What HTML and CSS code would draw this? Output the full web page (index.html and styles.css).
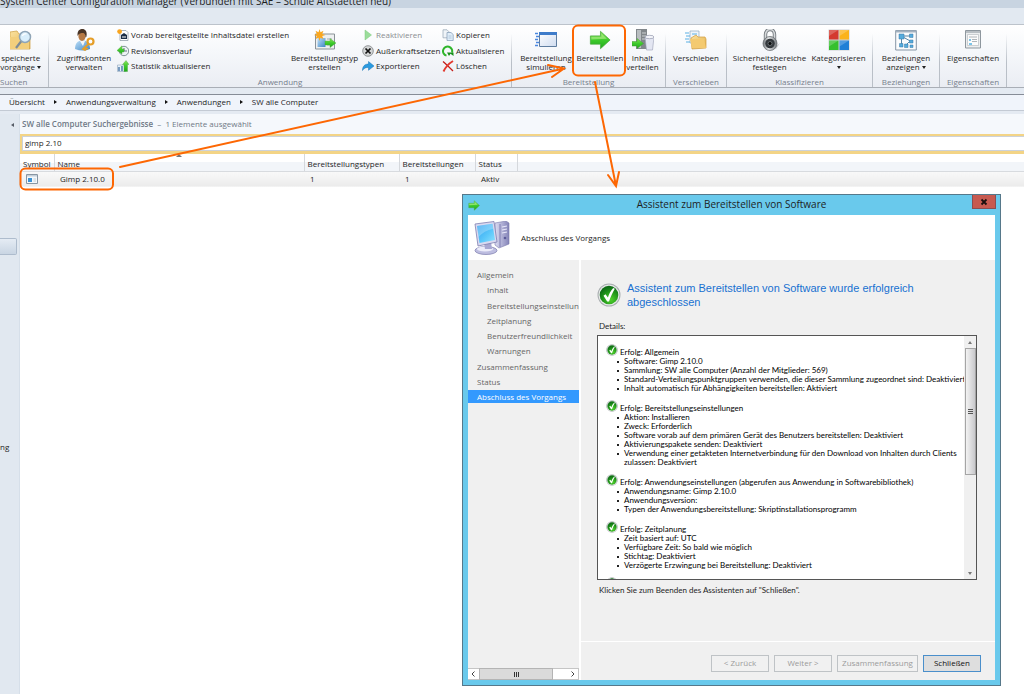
FILE: index.html
```html
<!DOCTYPE html>
<html lang="de">
<head>
<meta charset="utf-8">
<title>System Center Configuration Manager</title>
<link rel="stylesheet" href="styles.css">
</head>
<body>
<svg class="defs" width="0" height="0" aria-hidden="true">
  <defs>
    <linearGradient id="green" x1="0" y1="0" x2="0" y2="1"><stop offset="0" stop-color="#8be35c"/><stop offset=".5" stop-color="#3ecb2c"/><stop offset="1" stop-color="#20a81c"/></linearGradient>
    <linearGradient id="folder" x1="0" y1="0" x2="1" y2="1"><stop offset="0" stop-color="#fbe3a0"/><stop offset="1" stop-color="#e0ae4a"/></linearGradient>
    <linearGradient id="metal" x1="0" y1="0" x2="1" y2="0"><stop offset="0" stop-color="#6f7478"/><stop offset=".4" stop-color="#e6e8ea"/><stop offset="1" stop-color="#74797d"/></linearGradient>
    <linearGradient id="blue" x1="0" y1="0" x2="1" y2="1"><stop offset="0" stop-color="#bfe0f8"/><stop offset="1" stop-color="#3e86c6"/></linearGradient>
    <linearGradient id="screen" x1="0" y1="0" x2="1" y2="1"><stop offset="0" stop-color="#2d9ff0"/><stop offset=".6" stop-color="#5cc8fa"/><stop offset="1" stop-color="#8ee2ff"/></linearGradient>
    <linearGradient id="lilac" x1="0" y1="0" x2="1" y2="0"><stop offset="0" stop-color="#dcdcf2"/><stop offset="1" stop-color="#8484b8"/></linearGradient>
    <linearGradient id="window" x1="0" y1="0" x2="1" y2="1"><stop offset="0" stop-color="#fff"/><stop offset="1" stop-color="#cfdcf0"/></linearGradient>
    <radialGradient id="ball" cx=".6" cy=".75" r=".7"><stop offset="0" stop-color="#4fd02c"/><stop offset=".6" stop-color="#21961a"/><stop offset="1" stop-color="#0f6d16"/></radialGradient>
    <symbol id="check" viewBox="0 0 24 24">
      <circle cx="12" cy="12" r="11.5" fill="#a9aeb0"/><circle cx="12" cy="12" r="10.5" fill="#e6e8e8"/><circle cx="12" cy="12" r="9.3" fill="url(#ball)"/>
      <path d="M6.5 12.8l2-1.5 2.4 3.2C12 11 13.600 8 16.200 5l1.600.7C15.600 9.500 13.400 14 12 18.500h-1.800z" fill="#fff"/>
    </symbol>
    <symbol id="arrow" viewBox="0 0 24 22">
      <path d="M1.500 6.500h11V1.500L23 11 12.500 20.500v-5h-11z" fill="url(#green)" stroke="#48a83c" stroke-width=".8"/>
      <path d="M2.500 7.500h11V4l6 5.500-17 1z" fill="#b5f08c" opacity=".6"/>
    </symbol>
  </defs>
</svg>

<header class="titlebar">System Center Configuration Manager (Verbunden mit SAE – Schule Altstaetten neu)</header>
<div class="tabstrip"></div>

<nav class="ribbon" aria-label="Menüband">
  <section class="group group-search">
    <div class="tools">
      <button class="big"><svg viewBox="0 0 22 22"><path d="M0 3l7-1 2 3h11v15H0z" fill="url(#folder)" stroke="#d2a64e" stroke-width=".8"/><path d="M0 8h19v12H0z" fill="#f3cf7c"/><circle cx="15" cy="8" r="5.500" fill="#d9eefb" stroke="#8fa5b8" stroke-width="1.500"/><path d="M12.500 7a3 3 0 0 1 4-2" stroke="#fff" stroke-width="1.200" fill="none"/><path d="M11 12.500l-5 6.500" stroke="#7d8b97" stroke-width="2.200"/></svg><span>speicherte<br>vorgänge <i class="caret"></i></span></button>
    </div>
    <h2>Suchen</h2>
  </section>

  <section class="group">
    <div class="tools tools-app">
      <button class="big"><svg viewBox="0 0 22 22"><path d="M2 20c0-6 3-8 6-8.500h3c3 .5 6 3 6 8.500q-7 3-15 0z" fill="url(#blue)"/><path d="M7 12l3 5 2-5z" fill="#f5f5f5"/><ellipse cx="9" cy="7" rx="3.600" ry="5" fill="#b57945"/><path d="M4.500 7C4 1 7 0 9.500 0s5 2 4 7.500l-1 1c0-3-1-4-2-4.500-3 0-4 0-6 3z" fill="#493527"/><circle cx="17.500" cy="12.500" r="3" fill="none" stroke="#e59e28" stroke-width="2.200"/><path d="M15.500 15l-5.500 5 2 1 1-1.500 2 .5" fill="none" stroke="#e59e28" stroke-width="1.800"/></svg><span>Zugriffskonten<br>verwalten</span></button>
      <div class="stack">
        <button class="small"><svg viewBox="0 0 12 12"><path d="M3 1.500h6l2 2v8H3z" fill="#fff" stroke="#8693a0" stroke-width=".7"/><path d="M4 6l3-2 3 2v4H4z" fill="#1c2d45"/><path d="M5 8h4" stroke="#fff"/><circle cx="2.600" cy="2.600" r="2.400" fill="#f9a51e"/></svg>Vorab bereitgestellte Inhaltsdatei erstellen</button>
        <button class="small"><svg viewBox="0 0 12 12"><circle cx="7" cy="6" r="4.700" fill="#eef3f5" stroke="#7e9296"/><path d="M7 3v3h3" stroke="#456" fill="none" stroke-width=".8"/><path d="M5 .8L0 5.500 5 9V7h2V4H5z" fill="url(#green)" stroke="#55a64c" stroke-width=".4"/></svg>Revisionsverlauf</button>
        <button class="small"><svg viewBox="0 0 12 12"><path d="M.5 5h8v6.500h-8z" fill="#e6eff8" stroke="#8fa5bb" stroke-width=".6"/><path d="M2 7v4M5 6v5" stroke="#4878a8" stroke-width="1.400"/><path d="M9 11.500H7V4.500H5.500L9 .5l3 4h-1.500v7z" fill="url(#green)" stroke="#49a53e" stroke-width=".4"/></svg>Statistik aktualisieren</button>
      </div>
      <button class="big"><svg viewBox="0 0 22 22"><path d="M1.500 5h19v15h-19z" fill="#eef0f1" stroke="#8a9298"/><path d="M3.500 9h8v9h-8z" fill="url(#blue)"/><path d="M13 10h5M13 16h5" stroke="#a5adb2"/><path d="M11 12h5V9.500l6 4.500-6 4.500V16h-5z" fill="url(#green)" stroke="#4da542" stroke-width=".4"/><path d="M5.500 0l1 3.200 3-1.400L8.200 5l3.300 1-3.300 1.100 1.300 3-3-1.300-1 3.200-1-3.200-3 1.300 1.300-3L0 6l2.800-1-1.300-3.200 3 1.400z" fill="#f9a720"/></svg><span>Bereitstellungstyp<br>erstellen</span></button>
      <div class="stack">
        <button class="small" disabled><svg viewBox="0 0 12 12"><path d="M3 1l6.500 5L3 11z" fill="#9bdd9b" stroke="#7cc97c" stroke-width=".5"/></svg>Reaktivieren</button>
        <button class="small"><svg viewBox="0 0 12 12"><circle cx="6" cy="6" r="5.300" fill="#d4d6d7" stroke="#7c8082" stroke-width=".8"/><path d="M3.500 3.500l5 5m0-5l-5 5" stroke="#111" stroke-width="1.700"/></svg>Außerkraftsetzen</button>
        <button class="small"><svg viewBox="0 0 12 12"><path d="M.5 10.500C.5 6 3 4 6.500 4V1.500L12 6 6.500 10.300V7.500C4 7.300 2 8 .5 10.500z" fill="#2b9be0" stroke="#1b75b5" stroke-width=".5"/></svg>Exportieren</button>
      </div>
      <div class="stack">
        <button class="small"><svg viewBox="0 0 12 12"><path d="M1 .8h4l2 2v6H1z" fill="#f0f4f8" stroke="#93a3b5" stroke-width=".7"/><path d="M5 3.500h4l2.200 2v6H5z" fill="#e0edf8" stroke="#8098b4" stroke-width=".7"/><path d="M6.500 7h3M6.500 9h3" stroke="#9db8d2" stroke-width=".7"/></svg>Kopieren</button>
        <button class="small"><svg viewBox="0 0 12 12"><path d="M4.500 10.600A4.600 4.600 0 1 1 10 7.500" fill="none" stroke="#2fb52b" stroke-width="2"/><path d="M5 7.500h6.500V11L8.500 8.800 7 11z" fill="#168f1b"/></svg>Aktualisieren</button>
        <button class="small"><svg viewBox="0 0 12 12"><path d="M1 1.500C4 4 8 8 11 11" stroke="#c41e1a" stroke-width="1.300"/><path d="M11 1C7 3.500 3.500 7 1.500 11.500" stroke="#e23a30" stroke-width="1.900" fill="none"/></svg>Löschen</button>
      </div>
    </div>
    <h2>Anwendung</h2>
  </section>

  <section class="group">
    <div class="tools tools-deploy">
      <button class="big"><svg viewBox="0 0 22 22"><path d="M4.500 3.500h17v14h-17z" fill="url(#window)" stroke="#5f7d9f"/><path d="M4 3h18v3H4z" fill="#3e7cca"/><path d="M0 4.500h3M1 7.500h3M0 10.500h3M1 13.500h3M0 16.500h3" stroke="#4b88df" stroke-width="1.500"/></svg><span>Bereitstellung<br>simulieren</span></button>
      <button class="big"><svg><use href="#arrow"/></svg><span>Bereitstellen</span></button>
      <button class="big"><svg viewBox="0 0 22 22"><path d="M4 0h11v20H4z" fill="#81878b"/><path d="M5 1h4v18H5z" fill="#b9bec1"/><path d="M10 4h4M10 7h4M10 10h4" stroke="#ccd0d2"/><path d="M13 8h9l-1.500 13h-6z" fill="#e3e6f2" stroke="#9aa0b5" stroke-width=".6"/><ellipse cx="17.500" cy="8" rx="4.500" ry="1.700" fill="#f4f5fa" stroke="#9298ae" stroke-width=".7"/><path d="M0 12.500h5V9.500l6.500 5-6.500 5V17H0z" fill="url(#green)" stroke="#409b36" stroke-width=".5"/></svg><span>Inhalt<br>verteilen</span></button>
    </div>
    <h2>Bereitstellung</h2>
  </section>

  <section class="group">
    <div class="tools">
      <button class="big"><svg viewBox="0 0 22 22"><path d="M5 2h9v12H5z" fill="#eef5fb" stroke="#8eabc2" stroke-width=".7"/><path d="M0 4h4M1 7h4M0 10h4M1 13h4M7 5h5" stroke="#5bb0e4"/><path d="M6 9l5-3 2 2h7l1 2v9L7 20z" fill="url(#folder)" stroke="#d29b3a" stroke-width=".7"/><path d="M5 10h14l2 9H7z" fill="#f4ca70"/></svg><span>Verschieben</span></button>
    </div>
    <h2>Verschieben</h2>
  </section>

  <section class="group">
    <div class="tools tools-classify">
      <button class="big"><svg viewBox="0 0 22 22"><path d="M15 19l6-5-4 6z" fill="#c9cccf"/><path d="M6.500 12V5.500a4 4.500 0 0 1 9 0V12" fill="none" stroke="#777d82" stroke-width="3.400"/><path d="M6.500 12V5.500a4 4.500 0 0 1 9 0V12" fill="none" stroke="#d7dadc" stroke-width="1.600"/><circle cx="11" cy="14.500" r="7" fill="url(#metal)" stroke="#6b7074" stroke-width=".8"/><circle cx="11" cy="14.500" r="4.800" fill="#34393d"/><circle cx="11" cy="14.500" r="2" fill="#0b0d0e" stroke="#83898d" stroke-width=".7"/></svg><span>Sicherheitsbereiche<br>festlegen</span></button>
      <button class="big"><svg viewBox="0 0 22 22"><path d="M.5.5h21v21H.5z" fill="#cdd1d5"/><path d="M1 1h9.500v9.500H1z" fill="#d43a30"/><path d="M11.500 1H21v9.500h-9.500z" fill="#fbb31a"/><path d="M1 11.500h9.500V21H1z" fill="#35c02e"/><path d="M11.500 11.500H21V21h-9.500z" fill="#1f7fd6"/><path d="M1 1h9.500L1 7zM11.500 1H21l-9.500 6zM1 11.500h9.500L1 17.500zM11.500 11.500H21l-9.500 6z" fill="#fff" opacity=".22"/></svg><span>Kategorisieren<br><i class="caret"></i></span></button>
    </div>
    <h2>Klassifizieren</h2>
  </section>

  <section class="group">
    <div class="tools">
      <button class="big"><svg viewBox="0 0 22 22"><path d="M.7 1.500h20.600v19.500H.7z" fill="#fbfcfd" stroke="#8695a5"/><path d="M1 1.500h20v2H1z" fill="#a3b1bf"/><path d="M7 7h9M8 8l9 5M6.500 9v8M10 17l4-4h4" stroke="#5a86a8" fill="none"/><path d="M4 5h5v5H4zM14.500 5H18v3.500h-3.500zM14.500 11H18v3h-3.500zM4.500 14.500h3.500V18H4.500zM9.500 15H13v3.500H9.500zM15 16h3v2.500h-3z" fill="#55abdc" stroke="#3a7ba8" stroke-width=".5"/></svg><span>Beziehungen<br>anzeigen <i class="caret"></i></span></button>
    </div>
    <h2>Beziehungen</h2>
  </section>

  <section class="group">
    <div class="tools">
      <button class="big"><svg viewBox="0 0 22 22"><path d="M3.500 1.500h15v17.500h-15z" fill="#eceeef" stroke="#8e979e"/><path d="M4 2h14v2H4z" fill="#b8bec3"/><path d="M5.500 5.500h11v11h-11z" fill="#fbfbfb" stroke="#b0b6ba" stroke-width=".6"/><path d="M7 8h8M10 10.500h5M10 12.500h5" stroke="#a7adb2" stroke-width=".9"/><path d="M7 10h2v2H7zM7 14h3v2H7z" fill="#7cc4e8"/></svg><span>Eigenschaften</span></button>
    </div>
    <h2>Eigenschaften</h2>
  </section>
</nav>

<nav class="crumbs" aria-label="Pfad">
  <a href="#">Übersicht</a><i></i><a href="#">Anwendungsverwaltung</a><i></i><a href="#">Anwendungen</a><i></i><a href="#">SW alle Computer</a>
</nav>

<div class="workspace">
  <aside class="sidebar">
    <button class="collapse" aria-label="Navigation einklappen"></button>
    <div class="handle"></div>
    <span class="wunderbar">ng</span>
  </aside>
  <main class="results">
    <h1><b>SW alle Computer Suchergebnisse</b> &nbsp;–&nbsp; 1 Elemente ausgewählt</h1>
    <div class="search"><input type="text" value="gimp 2.10" aria-label="Suchen"></div>
    <table>
      <colgroup><col class="c-symbol"><col class="c-name"><col class="c-types"><col class="c-deploy"><col class="c-status"><col></colgroup>
      <thead><tr><th>Symbol</th><th class="sorted">Name</th><th>Bereitstellungstypen</th><th>Bereitstellungen</th><th>Status</th><th></th></tr></thead>
      <tbody><tr><td><svg class="app-icon" viewBox="0 0 12 10"><path d="M.5.500h11v9H.500z" fill="#f4f8fb" stroke="#8996a2"/><path d="M1 1h10v1.500H1z" fill="#c3ced8"/><path d="M2 4h4v4H2z" fill="#3c93d5"/><path d="M7.500 5h2.500M7.500 7h2.500" stroke="#b6c4cf" stroke-width=".8"/></svg></td><td>Gimp 2.10.0</td><td>1</td><td>1</td><td>Aktiv</td><td></td></tr></tbody>
    </table>
  </main>
</div>

<section class="dialog" role="dialog" aria-labelledby="dialog-title">
  <div class="dialog-bar">
    <svg class="dialog-icon"><use href="#arrow"/></svg>
    <h2 id="dialog-title">Assistent zum Bereitstellen von Software</h2>
    <button class="close" aria-label="Fenster schließen"><svg viewBox="0 0 8 8"><path d="M1.500 1.500l5 5m0-5l-5 5" stroke="#1a0f0e" stroke-width="1.800"/></svg></button>
  </div>
  <div class="dialog-client">
    <div class="dialog-head">
      <svg viewBox="0 0 36 34"><path d="M21 2l11-2 3 2v21l-10 4-4-3z" fill="url(#lilac)" stroke="#7b7bad" stroke-width=".6"/><path d="M26 3v23" stroke="#7070a8" stroke-width=".8"/><path d="M28 6l5-1M28 9l5-1M28 12l5-1" stroke="#e8e8fa" stroke-width="1.200"/><circle cx="31" cy="17" r="1.300" fill="#5a5a98"/><ellipse cx="12" cy="29.500" rx="11" ry="4" fill="#bdbde0" stroke="#7979ac" stroke-width=".7"/><ellipse cx="11" cy="28" rx="8" ry="2.500" fill="#ececfa"/><path d="M10 22l7-1 1 7h-7z" fill="#a7a7d2"/><path d="M1 3L20 .500l3 20.500L4 25z" fill="#d9d9f0" stroke="#7f7fb0" stroke-width=".8"/><path d="M3 5l15.500-2.200L21 19 5.500 22z" fill="url(#screen)"/><path d="M3 5l15.500-2.200.8 5C13 9 8 12 4.500 16z" fill="#fff" opacity=".25"/></svg>
      <h3>Abschluss des Vorgangs</h3>
    </div>
    <div class="dialog-body">
      <nav class="steps" aria-label="Schritte">
        <ol>
          <li>Allgemein</li><li class="sub">Inhalt</li><li class="sub">Bereitstellungseinstellung</li><li class="sub">Zeitplanung</li><li class="sub">Benutzerfreundlichkeit</li><li class="sub">Warnungen</li><li>Zusammenfassung</li><li>Status</li><li class="current">Abschluss des Vorgangs</li>
        </ol>
        <div class="hscroll" aria-hidden="true"><svg viewBox="0 0 8 8"><path d="M5 1.500L2.500 4 5 6.500"/></svg><div class="hthumb"><i></i><i></i><i></i></div><svg viewBox="0 0 8 8"><path d="M3 1.500L5.500 4 3 6.500"/></svg></div>
      </nav>
      <div class="page">
        <div class="page-main">
          <div class="success"><svg><use href="#check"/></svg><p>Assistent zum Bereitstellen von Software wurde erfolgreich abgeschlossen</p></div>
          <p class="details-label">Details:</p>
          <div class="details">
            <div class="report">
              <h4><svg><use href="#check"/></svg>Erfolg: Allgemein</h4>
              <ul><li>Software: Gimp 2.10.0</li><li>Sammlung: SW alle Computer (Anzahl der Mitglieder: 569)</li><li>Standard-Verteilungspunktgruppen verwenden, die dieser Sammlung zugeordnet sind: Deaktiviert</li><li>Inhalt automatisch für Abhängigkeiten bereitstellen: Aktiviert</li></ul>
              <h4><svg><use href="#check"/></svg>Erfolg: Bereitstellungseinstellungen</h4>
              <ul><li>Aktion: Installieren</li><li>Zweck: Erforderlich</li><li>Software vorab auf dem primären Gerät des Benutzers bereitstellen: Deaktiviert</li><li>Aktivierungspakete senden: Deaktiviert</li><li>Verwendung einer getakteten Internetverbindung für den Download von Inhalten durch Clients<br>zulassen: Deaktiviert</li></ul>
              <h4><svg><use href="#check"/></svg>Erfolg: Anwendungseinstellungen (abgerufen aus Anwendung in Softwarebibliothek)</h4>
              <ul><li>Anwendungsname: Gimp 2.10.0</li><li>Anwendungsversion:</li><li>Typen der Anwendungsbereitstellung: Skriptinstallationsprogramm</li></ul>
              <h4><svg><use href="#check"/></svg>Erfolg: Zeitplanung</h4>
              <ul><li>Zeit basiert auf: UTC</li><li>Verfügbare Zeit: So bald wie möglich</li><li>Stichtag: Deaktiviert</li><li>Verzögerte Erzwingung bei Bereitstellung: Deaktiviert</li></ul>
              <h4><svg><use href="#check"/></svg></h4>
            </div>
            <div class="vscroll" aria-hidden="true"><i class="up"></i><div class="vthumb"><i></i><i></i><i></i></div><i class="down"></i></div>
          </div>
          <p class="hint">Klicken Sie zum Beenden des Assistenten auf "Schließen".</p>
        </div>
        <footer class="actions">
          <button disabled>&lt; Zurück</button><button disabled>Weiter &gt;</button><button class="wide" disabled>Zusammenfassung</button><button class="default">Schließen</button>
        </footer>
      </div>
    </div>
  </div>
</section>

<svg class="marks" viewBox="0 0 1024 694" aria-hidden="true">
  <rect x="573" y="25.500" width="52" height="50" rx="5"/>
  <rect x="20.500" y="168.500" width="92.500" height="21" rx="5"/>
  <path d="M120 167L564 68.500M548 65l16 3.500-12 8.500"/>
  <path d="M595 82l21 104M608 175l8 11 3-14"/>
</svg>
</body>
</html>
```
FILE: styles.css
```css
* { box-sizing: border-box; }

html, body { height: 100%; }

body {
  margin: 0;
  display: flex;
  flex-direction: column;
  position: relative;
  overflow: hidden;
  background: #e4eaf2;
  color: #1e1e1e;
  font: 8px/10px "Open Sans", "Noto Sans", sans-serif;
}

h1, h2, h3, h4, p, ul, ol { margin: 0; padding: 0; font: inherit; }
ul, ol { list-style: none; }
button { font: inherit; color: inherit; border: 0; padding: 0; background: none; }
.defs { position: absolute; }

.titlebar {
  height: 8px;
  flex: none;
  display: flex;
  align-items: flex-end;
  padding-bottom: 1px;
  background: #c8d4e1;
  font-size: 10px;
  line-height: 12px;
  white-space: nowrap;
}
.tabstrip { flex: none; height: 16px; background: #e2e9f1; }

/* Ribbon */
.ribbon {
  flex: none;
  display: grid;
  grid-template-columns: 49px 463px 154px 61px 146px 67px 67px;
  height: 64px;
  border-top: 1px solid #bcc3cb;
  border-bottom: 1px solid #a9aeb6;
  background: linear-gradient(#fff, #f6f8fb 40%, #eaedf3);
}
.group {
  display: flex;
  flex-direction: column;
  justify-content: space-between;
  overflow: hidden;
  border-right: 1px solid;
  border-image: linear-gradient(transparent 15%, #b9bfc7 60%) 1;
}
.group h2 { color: #76808d; text-align: center; line-height: 11px; }
.tools { display: grid; justify-content: center; padding-top: 4px; }
.group-search .tools { justify-content: end; padding-right: 7px; }
.group-search h2 { padding-right: 22px; }
.tools-app { grid-template-columns: 62px 174px 71px 80px 66px; justify-content: start; padding-left: 4px; }
.tools-deploy { grid-template-columns: 57px 51px 34px; }
.tools-classify { grid-template-columns: 78px 60px; }
.big {
  display: flex;
  flex-direction: column;
  align-items: center;
  gap: 2px;
  line-height: 9px;
  white-space: nowrap;
}
.big svg { width: 22px; height: 22px; }
.caret {
  display: inline-block;
  vertical-align: middle;
  border: 2px solid transparent;
  border-top: 3px solid #222;
  border-bottom: 0;
}
.stack { display: flex; flex-direction: column; justify-content: space-between; align-items: start; height: 43px; padding-left: 2px; }
.small { display: flex; align-items: center; gap: 2px; height: 12px; white-space: nowrap; }
.small svg { width: 12px; height: 12px; }
.small:disabled { color: #8a8d90; }

.crumbs {
  flex: none;
  display: flex;
  align-items: center;
  gap: 9px;
  margin: 6px 0 3px;
  padding: 0 9px 2px;
  height: 17px;
  border-top: 1px solid #868c97;
  border-bottom: 1px solid #c3cad4;
  background: #f0f4fb;
}
.crumbs a { color: inherit; text-decoration: none; }
.crumbs i { border: 2px solid transparent; border-left: 3px solid #111; border-right: 0; }

/* Work area */
.workspace { flex: 1; display: flex; min-height: 0; }
.sidebar { width: 20px; flex: none; border-right: 1px solid #d6dfe9; background: #e1e8f0; }
.collapse {
  display: block;
  margin: 9px 0 111px 11px;
  border: 2px solid transparent;
  border-right: 3px solid #555c66;
  border-left: 0;
}
.handle { width: 17px; height: 17px; border: 1px solid #aebccd; border-left: 0; border-radius: 0 2px 2px 0; background: linear-gradient(#e5ecf4, #c9d5e3); }
.wunderbar { display: block; width: 11px; margin-top: 187px; }
.results { flex: 1; min-width: 0; background: #fff; }
.results h1 { height: 20px; padding: 0 2px; line-height: 20px; color: #6f7886; background: #f5f8fc; }
.results h1 b { font-weight: 600; }
.search { padding: 2px 0 3px 2px; background: #f3d486; }
.search input {
  display: block;
  width: 100%;
  height: 15px;
  padding: 0 2px 2px;
  border: 1px solid #ccd2da;
  border-right: 0;
  background: #fff;
  color: inherit;
  font: inherit;
}
table { width: 100%; table-layout: fixed; border-collapse: collapse; }
.c-symbol { width: 34px; }
.c-name { width: 250px; }
.c-types { width: 95px; }
.c-deploy { width: 76px; }
.c-status { width: 42px; }
th {
  height: 17px;
  padding: 3px 3px 0;
  border-right: 1px solid #d5d8dc;
  border-bottom: 1px solid #d8dbdf;
  background: linear-gradient(#fff 50%, #f2f5f9 50%);
  font-weight: 400;
  text-align: left;
}
th:last-child { border-right: 0; }
.sorted { position: relative; }
.sorted::after {
  content: "";
  position: absolute;
  top: 0;
  left: calc(50% - 3px);
  border: 3px solid transparent;
  border-top: 0;
  border-bottom-color: #777;
}
td { height: 16px; padding: 0 6px; background: linear-gradient(#f9f9f9, #ebebeb); }
.app-icon { display: block; width: 12px; height: 10px; }

/* Wizard window */
.dialog {
  position: absolute;
  left: 462px;
  top: 194px;
  width: 539px;
  height: 492px;
  display: flex;
  flex-direction: column;
  padding: 0 5px 5px;
  border: 1px solid #56788a;
  background: #69c9ec;
}
.dialog-bar { display: grid; grid-template-columns: 40px 1fr 40px; height: 20px; align-items: center; }
.dialog-bar h2 { padding-bottom: 2px; font-size: 10px; line-height: 12px; text-align: center; }
.dialog-icon { width: 12px; height: 11px; }
.close { align-self: start; justify-self: end; width: 24px; height: 14px; margin-right: -1px; border: 1px solid #8d4d50; border-top: 0; background: #c75a50; }
.close svg { display: block; width: 8px; height: 8px; margin: auto; }
.dialog-client { flex: 1; display: flex; flex-direction: column; min-height: 0; background: #f0f0f0; }
.dialog-head { flex: none; display: flex; align-items: center; gap: 11px; height: 45px; padding-left: 6px; background: #fff; }
.dialog-head svg { width: 36px; height: 34px; }
.dialog-body { flex: 1; display: flex; min-height: 0; }
.steps { flex: none; display: flex; flex-direction: column; justify-content: space-between; width: 113px; padding-top: 8px; border-right: 2px solid #fff; color: #666; }
.steps ol { display: flex; flex-direction: column; justify-content: space-between; height: 135px; }
.steps li { height: 13px; padding-left: 9px; line-height: 13px; white-space: nowrap; overflow: hidden; }
.steps .sub { padding-left: 19px; }
.steps .current { background: #3399fe; color: #fff; }
.hscroll { display: flex; align-items: center; height: 12px; border: 1px solid #c5c5c5; border-left: 0; background: #fff; }
.hscroll svg { width: 11px; height: 8px; fill: none; stroke: #444; stroke-width: 1; }
.hscroll svg:last-child { margin-left: auto; }
.hthumb { display: flex; align-items: center; justify-content: center; gap: 1px; width: 74px; height: 12px; border: 1px solid #b4b4b4; background: #dadada; }
.hthumb i { width: 1px; height: 5px; background: #333; }
.page { flex: 1; display: flex; flex-direction: column; min-width: 0; font-family: Lato, "Liberation Sans", sans-serif; line-height: 9px; }
.page-main { flex: 1; padding: 21px 18px 0 16px; }
.success { display: flex; align-items: center; gap: 6px; color: #1870d0; font: 11px/14px "Liberation Sans", Arial, sans-serif; }
.success svg { flex: none; width: 24px; height: 24px; }
.success p { width: 300px; }
.details-label { margin: 13px 0 4px 2px; }
.details { display: flex; height: 245px; border: 1px solid #555; background: #fff; color: #000; }
.report { flex: 1; overflow: hidden; padding: 12px 0 0 8px; white-space: nowrap; }
.report h4 { display: flex; align-items: flex-end; gap: 2px; height: 9px; }
.report h4 svg { width: 12px; height: 12px; margin-bottom: 1px; flex: none; }
.report ul { padding-left: 11px; margin-bottom: 11px; }
.report li { padding-left: 7px; background: linear-gradient(#222, #222) 0 4px / 2px 2px no-repeat; }
.vscroll { flex: none; display: flex; flex-direction: column; align-items: center; width: 12px; background: #f0f0f0; }
.vscroll .up, .vscroll .down { margin: 5px 0 4px; border: 2px solid transparent; }
.vscroll .up { border-top: 0; border-bottom: 3px solid #777; }
.vscroll .down { margin-top: auto; border-bottom: 0; border-top: 3px solid #777; }
.vthumb { display: flex; flex-direction: column; align-items: center; justify-content: center; gap: 1px; width: 11px; height: 127px; border: 1px solid #a5a5a5; background: linear-gradient(90deg, #f3f3f3, #c9c9cc); }
.vthumb i { width: 5px; height: 1px; background: #555; }
.hint { margin: 6px 2px; }
.actions { display: flex; justify-content: flex-end; gap: 5px; height: 39px; padding: 13px 14px 0 0; border-top: 1px solid #fff; font: 8px/10px "Open Sans", "Noto Sans", sans-serif; }
.actions button { width: 58px; height: 17px; padding-bottom: 1px; border: 1px solid #bfc3c6; background: #f1f1f1; color: #9b9b9b; }
.actions .wide { width: 81px; }
.actions .default { border-color: #4a8fcb; background: #dedede; color: #111; }

/* Callouts drawn over the window */
.marks { position: absolute; inset: 0; width: 1024px; height: 694px; fill: none; stroke: #fd6703; stroke-width: 2; stroke-linecap: round; pointer-events: none; }
```
